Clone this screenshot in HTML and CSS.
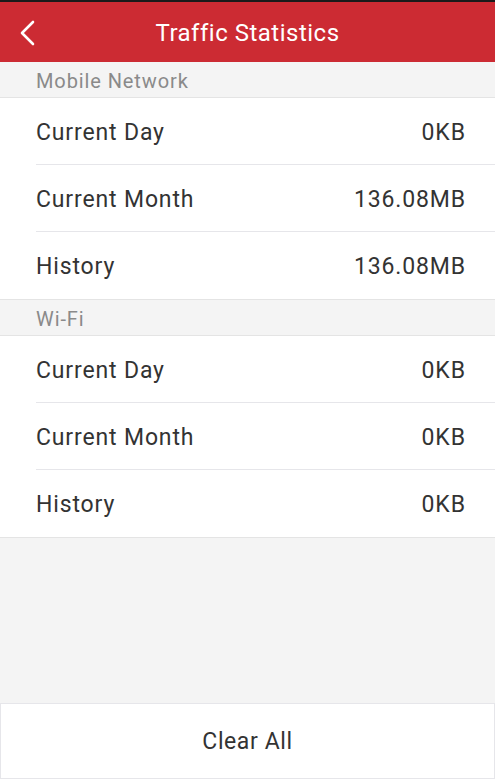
FILE: index.html
```html
<!DOCTYPE html>
<html>
<head>
<meta charset="utf-8">
<link rel="stylesheet" href="styles.css">
</head>
<body>
<div class="app">
  <header class="topbar">
    <svg class="back" width="16" height="26" viewBox="0 0 16 26"><path d="M14 2 L3 13 L14 24" fill="none" stroke="#fff" stroke-width="2.6" stroke-linecap="round" stroke-linejoin="round"/></svg>
    <h1 class="title">Traffic Statistics</h1>
  </header>
  <main class="content">
    <section class="group">
      <div class="group-head">Mobile Network</div>
      <ul class="rows">
        <li class="row"><span>Current Day</span><span>0KB</span></li>
        <li class="row"><span>Current Month</span><span>136.08MB</span></li>
        <li class="row"><span>History</span><span>136.08MB</span></li>
      </ul>
    </section>
    <section class="group">
      <div class="group-head">Wi-Fi</div>
      <ul class="rows">
        <li class="row"><span>Current Day</span><span>0KB</span></li>
        <li class="row"><span>Current Month</span><span>0KB</span></li>
        <li class="row"><span>History</span><span>0KB</span></li>
      </ul>
    </section>
  </main>
  <button class="clear">Clear All</button>
</div>
</body>
</html>
```
FILE: styles.css
```css
* { box-sizing: border-box; }
html, body { margin: 0; padding: 0; }
body {
  font-family: Roboto, "Noto Sans", sans-serif;
  background: #f4f4f4;
  width: 495px;
  height: 779px;
  overflow: hidden;
}
.app {
  display: flex;
  flex-direction: column;
  height: 779px;
  border-top: 2px solid #1a1a1a;
}
.topbar {
  height: 60px;
  background: #cc2b33;
  display: flex;
  align-items: center;
  justify-content: center;
  position: relative;
}
.back {
  position: absolute;
  left: 19px;
  top: 18px;
}
.title {
  margin: 0;
  padding-top: 2px;
  color: #fff;
  font-size: 24px;
  letter-spacing: 0.5px;
  font-weight: 400;
}
.content { flex: 1; }
.group-head {
  height: 36px;
  padding-left: 36px;
  padding-top: 2px;
  display: flex;
  align-items: center;
  color: #8a8a8a;
  font-size: 20px;
  letter-spacing: 0.9px;
  border-bottom: 1px solid #e4e4e4;
}
.rows {
  list-style: none;
  margin: 0;
  padding: 0 0 0 36px;
  background: #fff;
  border-bottom: 1px solid #e4e4e4;
}
.row {
  height: 67px;
  display: flex;
  justify-content: space-between;
  align-items: center;
  padding-right: 30px;
  padding-top: 2px;
  font-size: 23px;
  letter-spacing: 0.85px;
  color: #333;
  border-bottom: 1px solid #e6e6ea;
}
.row span:last-child { margin-right: -0.85px; }
.row:last-child { border-bottom: none; }
.clear {
  height: 76px;
  margin: 0;
  padding-top: 2px;
  background: #fff;
  border: 1px solid #e6e6ea;
  font-family: Roboto, "Noto Sans", sans-serif;
  font-size: 23px;
  letter-spacing: 0.6px;
  color: #333;
}
```
